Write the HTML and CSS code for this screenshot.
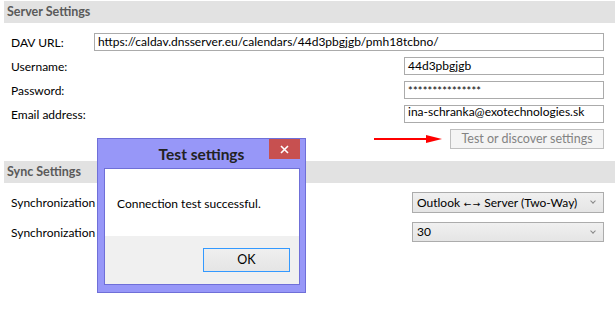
FILE: index.html
```html
<!DOCTYPE html>
<html>
<head>
<meta charset="utf-8">
<link rel="stylesheet" href="styles.css">
</head>
<body>
<div class="page">
  <div class="band">Server Settings</div>
  <div class="row r-url">
    <span class="label">DAV URL:</span>
    <div class="field url">https://caldav.dnsserver.eu/calendars/44d3pbgjgb/pmh18tcbno/</div>
  </div>
  <div class="row">
    <span class="label">Username:</span>
    <div class="field short">44d3pbgjgb</div>
  </div>
  <div class="row">
    <span class="label">Password:</span>
    <div class="field short pw">***************</div>
  </div>
  <div class="row">
    <span class="label">Email address:</span>
    <div class="field short email"><span>ina-schranka@exotechnologies.sk</span></div>
  </div>
  <div class="row r-btn">
    <svg class="arrow" width="70" height="10" viewBox="0 0 70 10">
      <rect x="0" y="4" width="56" height="2" fill="#ff0000"/>
      <polygon points="52,1 68,5 52,9" fill="#ff0000"/>
    </svg>
    <div class="btn-disabled">Test or discover settings</div>
  </div>
  <div class="band sync">Sync Settings</div>
  <div class="row r-sel">
    <span class="label">Synchronization</span>
    <div class="select">Outlook <span class="arr">←</span><span class="arr">→</span> Server (Two-Way)<span class="chev"></span></div>
  </div>
  <div class="row r-sel2">
    <span class="label">Synchronization</span>
    <div class="select">30<span class="chev"></span></div>
  </div>

  <div class="dialog">
    <div class="titlebar">Test settings<div class="close">
      <svg width="9" height="9" viewBox="0 0 9 9"><path d="M1 1L8 8M8 1L1 8" stroke="#fff" stroke-width="1.6"/></svg>
    </div></div>
    <div class="dlg-body">
      <div class="msg">Connection test successful.</div>
      <div class="dlg-foot"><div class="ok">OK</div></div>
    </div>
  </div>
</div>
</body>
</html>
```

FILE: styles.css
```css
* { box-sizing: border-box; }
html, body { margin: 0; padding: 0; background: #fff; }
body { width: 615px; height: 310px; overflow: hidden; font-family: "Lato", "Segoe UI", sans-serif; font-size: 12px; color: #000; }
.page { position: relative; width: 615px; height: 310px; padding: 1px 11px 0 4px; }
.band { height: 22px; margin-right: -11px; background: #e2e2e2; color: #5a5a5a; font-weight: bold; padding-left: 3px; line-height: 22px; font-size: 12.5px; }
.band.sync { margin-top: 12px; }
.row { display: flex; align-items: center; height: 18px; margin-top: 6px; }
.r-url { margin-top: 10px; }
.label { padding-left: 7px; white-space: nowrap; }
.field { margin-left: auto; height: 18px; border: 1px solid #ababab; background: #fff; padding: 0 3px; line-height: 15px; white-space: nowrap; overflow: hidden; }
.field.url { width: 510px; }
.field.short { width: 200px; }
.field.pw { font-size: 11px; line-height: 17px; letter-spacing: 0.2px; }
.field.email span { display: block; margin-top: -2px; }
.r-btn { height: 20px; margin-top: 6px; }
.arrow { margin-left: auto; margin-right: 6px; }
.btn-disabled { width: 154px; height: 20px; border: 1px solid #bfbfbf; background: #f4f4f4; color: #838383; text-align: center; line-height: 18px; font-size: 12.5px; }
.r-sel { height: 21px; margin-top: 9px; }
.r-sel2 { height: 20px; margin-top: 9px; }
.select { margin-left: auto; width: 192px; height: 100%; border: 1px solid #acacac; background: linear-gradient(#f0f0f0, #e5e5e5); padding-left: 4px; line-height: 19px; position: relative; font-size: 12px; white-space: nowrap; }
.arr { display: inline-block; font-family: "DejaVu Sans", sans-serif; font-size: 9px; width: 9px; text-align: center; }
.r-sel2 .select { line-height: 18px; }
.chev { position: absolute; right: 8px; top: 6px; width: 4px; height: 4px; border-right: 1px solid #888; border-bottom: 1px solid #888; transform: rotate(45deg); }

.dialog { position: absolute; left: 97px; top: 138px; width: 209px; height: 155px; border: 1px solid #6f6fd8; background: #9797f8; padding: 0 5px 7px 6px; display: flex; flex-direction: column; }
.titlebar { height: 29px; flex: none; text-align: center; font-weight: bold; font-size: 15.5px; color: #222; line-height: 31px; margin: 0 -5px 0 -6px; position: relative; }
.close { position: absolute; right: 5px; top: 0; width: 31px; height: 20px; background: #c75050; display: flex; align-items: center; justify-content: center; }
.dlg-body { flex: 1; border: 1px solid #6f6fd8; background: #fff; display: flex; flex-direction: column; }
.msg { height: 67px; padding: 27px 0 0 12px; font-size: 12px; }
.dlg-foot { flex: 1; background: #f0f0f0; display: flex; justify-content: flex-end; align-items: flex-start; padding: 12px 9px 0 0; }
.ok { width: 87px; height: 24px; border: 1px solid #3399ff; background: linear-gradient(#efefef, #e5e5e5); text-align: center; line-height: 22px; font-size: 12.5px; }
```
